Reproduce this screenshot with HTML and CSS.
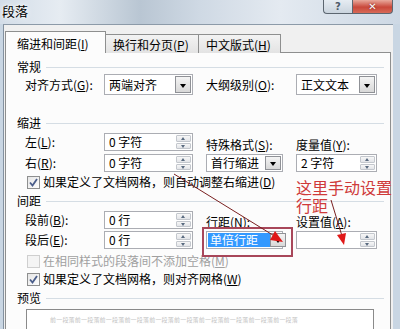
FILE: index.html
```html
<!DOCTYPE html>
<html lang="zh-CN">
<head>
<meta charset="utf-8">
<title>段落</title>
<link rel="stylesheet" href="styles.css">
</head>
<body>
<div class="win">
  <div class="titlebar">
    <span class="title">段落</span>
    <div class="caps">
      <span class="cap help">?</span>
      <span class="cap close">✕</span>
    </div>
  </div>
  <div class="client">
    <div class="tabs">
      <div class="tab active">缩进和间距(<u>I</u>)</div>
      <div class="tab">换行和分页(<u>P</u>)</div>
      <div class="tab">中文版式(<u>H</u>)</div>
    </div>
    <div class="pane">
      <div class="sec s-general"><span>常规</span></div>
      <div class="grid g-general">
        <span class="lbl">对齐方式(<u>G</u>):</span>
        <div class="select c2"><span class="val">两端对齐</span><i class="dd"></i></div>
        <span class="lbl c4">大纲级别(<u>O</u>):</span>
        <div class="select c5"><span class="val">正文文本</span><i class="dd"></i></div>
      </div>

      <div class="sec s-indent"><span>缩进</span></div>
      <div class="grid g-pair g-indent">
        <span class="lbl r1">左(<u>L</u>):</span>
        <div class="spin c2 r1"><span class="val">0 字符</span><i class="sp"><b class="up"></b><b class="down"></b></i></div>
        <span class="lbl r2">右(<u>R</u>):</span>
        <div class="spin c2 r2"><span class="val">0 字符</span><i class="sp"><b class="up"></b><b class="down"></b></i></div>
        <div class="stack c4">
          <span class="slbl">特殊格式(<u>S</u>):</span>
          <div class="select narrow"><span class="val">首行缩进</span><i class="dd"></i></div>
        </div>
        <div class="stack c5">
          <span class="slbl">度量值(<u>Y</u>):</span>
          <div class="spin"><span class="val">2 字符</span><i class="sp"><b class="up"></b><b class="down"></b></i></div>
        </div>
      </div>
      <div class="check c-auto"><i class="box on"><svg viewBox="0 0 11 11"><path d="M2 5.5 L4.5 8.5 L9 2"/></svg></i><span>如果定义了文档网格，则自动调整右缩进(<u>D</u>)</span></div>

      <div class="sec s-spacing"><span>间距</span></div>
      <div class="grid g-pair g-space">
        <span class="lbl r1">段前(<u>B</u>):</span>
        <div class="spin c2 r1"><span class="val">0 行</span><i class="sp"><b class="up"></b><b class="down"></b></i></div>
        <span class="lbl r2">段后(<u>E</u>):</span>
        <div class="spin c2 r2"><span class="val">0 行</span><i class="sp"><b class="up"></b><b class="down"></b></i></div>
        <div class="stack c4">
          <span class="slbl">行距(<u>N</u>):</span>
          <div class="select narrow"><span class="val sel">单倍行距</span><i class="dd"></i></div>
        </div>
        <div class="stack c5">
          <span class="slbl">设置值(<u>A</u>):</span>
          <div class="spin"><span class="val"></span><i class="sp"><b class="up"></b><b class="down"></b></i></div>
        </div>
      </div>
      <div class="check c-dis"><i class="box"></i><span>在相同样式的段落间不添加空格(<u>M</u>)</span></div>
      <div class="check c-grid"><i class="box on"><svg viewBox="0 0 11 11"><path d="M2 5.5 L4.5 8.5 L9 2"/></svg></i><span>如果定义了文档网格，则对齐网格(<u>W</u>)</span></div>

      <div class="sec s-preview"><span>预览</span></div>
      <div class="preview">
        <p>前一段落前一段落前一段落前一段落前一段落前一段落前一段落前一段落前一段落前一段落</p>
      </div>
    </div>
  </div>

  <div class="note"><span class="nl">这里手动设置</span><span class="nl">行距</span></div>
  <div class="redbox"></div>
  <svg class="arrows" width="400" height="329" viewBox="0 0 400 329">
    <line x1="174" y1="174" x2="276" y2="237" />
    <polygon class="head" points="283,242 270,240 275,231" />
    <line x1="331" y1="200" x2="342" y2="236" />
    <polygon class="head" points="344,245 337,235 346,233" />
  </svg>
</div>
</body>
</html>
```

FILE: styles.css
```css
* { box-sizing: border-box; margin: 0; padding: 0; }
html, body { width: 400px; height: 329px; overflow: hidden; }
body {
  font-family: "Noto Sans CJK SC", "Noto Sans", sans-serif;
  font-size: 12px;
  line-height: 14px;
  color: #000;
  background: #c9d6e3;
}
u { text-decoration: underline; text-underline-offset: 1px; }

.win { position: relative; width: 400px; height: 329px; overflow: hidden; }

.titlebar {
  height: 24px;
  display: flex;
  align-items: flex-start;
  background: linear-gradient(90deg, #d3dde8 0%, #e6ecf2 15%, #b9c6d3 35%, #cfd9e4 50%, #e4eaf1 70%, #cdd8e4 100%);
}
.title { font-size: 13px; line-height: 16px; padding: 3px 0 0 2px; text-shadow: 0 0 6px #fff, 0 0 3px #fff; }
.caps { margin-left: auto; margin-right: 7px; display: flex; }
.cap {
  height: 14px;
  display: flex; align-items: center; justify-content: center;
  border: 1px solid #5c6670; border-top: none;
  font-family: "DejaVu Sans", sans-serif;
}
.help {
  width: 29px; border-radius: 0 0 0 4px; border-right: none;
  background: linear-gradient(#e6ecf2, #cad4de);
  color: #4d5a69; font-size: 10px; font-weight: bold;
}
.close {
  width: 41px; border-radius: 0 0 4px 0;
  background: linear-gradient(#e9a99c, #c9483a 55%, #d86a58);
  color: #fff; font-size: 10px; font-weight: bold;
  text-shadow: 0 0 2px #6a1a10;
}

.client {
  margin-left: 3px; margin-right: 7px;
  height: 305px;
  background: #f0f0f0;
  border-left: 1px solid #8391a0;
  border-top: 1px solid #8c9aa8;
  padding: 6px 1px 0 1px;
  overflow: hidden;
}

.tabs { display: flex; align-items: flex-end; height: 22px; position: relative; z-index: 1; }
.tab {
  height: 19px;
  border: 1px solid #8e8f8f; border-bottom: none;
  background: linear-gradient(#f3f3f3, #e3e3e3);
  padding: 2px 0 0 7px;
  margin-left: -1px;
  line-height: 15px;
}
.tab:nth-child(2) { width: 94px; }
.tab:nth-child(3) { width: 83px; }
.tab.active {
  width: 101px; height: 22px; margin-left: 0;
  background: #fcfcfc;
  padding: 4px 0 0 11px;
  z-index: 2;
}

.pane {
  margin-top: -1px;
  width: 386px;
  height: 290px;
  border: 1px solid #8e8f8f;
  border-bottom: none;
  background: #fcfcfc;
  padding: 0 0 0 11px;
  overflow: hidden;
}

.sec { display: flex; align-items: center; height: 14px; }
.sec::after { content: ""; flex: 1; height: 1px; background: #d5dde4; margin: 1px 6px 0 5px; }
.s-general { margin-top: 7px; }
.s-indent { margin-top: 21px; }
.s-spacing { margin-top: 5px; }
.s-preview { margin-top: 5px; }

.grid {
  display: grid;
  grid-template-columns: 79px 89px 13px 90px 81px;
  margin-left: 8px;
  align-items: center;
}
.lbl { grid-column: 1; white-space: nowrap; }
.c2 { grid-column: 2; }
.c4 { grid-column: 4; }
.c5 { grid-column: 5; }
.r1 { grid-row: 1; }
.r2 { grid-row: 2; }

.g-general { height: 21px; grid-template-rows: 21px; }
.g-general .select { height: 21px; grid-row: 1; }
.g-general .lbl { grid-row: 1; }

.g-pair { grid-template-rows: 18px 18px; }
.g-indent { margin-top: 3px; row-gap: 3px; }
.g-space { margin-top: 3px; row-gap: 2px; }
.g-pair .stack { grid-row: 1 / 3; align-self: end; display: flex; flex-direction: column; }
.slbl { height: 16px; white-space: nowrap; }

.select, .spin {
  height: 18px;
  border: 1px solid #abadb3;
  background: #fff;
  display: flex; align-items: center;
  padding: 1px;
}
.select.narrow { width: 77px; }
.val { flex: 1; padding-left: 3px; white-space: nowrap; line-height: 14px; }
.val.sel { flex: 0 0 62px; background: #3399ff; color: #fff; padding-left: 2px; line-height: 14px; }
.val.sel + .dd { margin-left: auto; }
.dd {
  width: 16px; align-self: stretch; flex: none;
  border: 1px solid #8f9196;
  background: linear-gradient(#f4f4f4, #d8d8d8);
  position: relative;
}
.dd::after {
  content: ""; position: absolute; left: 4px; top: 5px;
  border-left: 3.5px solid transparent; border-right: 3.5px solid transparent; border-top: 4px solid #000;
}
.g-general .dd::after { top: 7px; }
.sp { width: 15px; flex: none; align-self: stretch; display: flex; flex-direction: column; gap: 1px; }
.sp b {
  flex: 1; position: relative;
  border: 1px solid #c3c7cd; border-radius: 1px;
  background: linear-gradient(#f7f7f7, #e2e4e8);
}
.sp b::after {
  content: ""; position: absolute; left: 4px; top: 2px;
  border-left: 2.5px solid transparent; border-right: 2.5px solid transparent;
}
.sp .up::after { border-bottom: 3px solid #5a6b80; top: 1px; }
.sp .down::after { border-top: 3px solid #5a6b80; top: 1px; }

.check { display: flex; align-items: center; margin-left: 10px; height: 14px; gap: 3px; }
.box {
  width: 13px; height: 13px;
  border: 1px solid #8e8f8f;
  background: linear-gradient(135deg, #e6e6e6, #fdfdfd);
  display: flex; align-items: center; justify-content: center;
}
.box svg { width: 11px; height: 11px; fill: none; stroke: #4a5d8a; stroke-width: 1.8; }
.c-auto { margin-top: 3px; }
.c-dis { margin-top: 5px; color: #a0a0a0; }
.c-dis .box { border-color: #cfcfcf; background: #f4f4f4; }
.c-grid { margin-top: 4px; }

.preview {
  margin: 4px 0 0 9px;
  width: 348px; height: 40px;
  border: 1px solid #8a8a8a;
  background: #fff;
  padding: 6px 0 0 23px;
}
.preview p { font-size: 6px; line-height: 8px; color: #c4c4c4; letter-spacing: 0.2px; white-space: nowrap; }

.note {
  position: absolute; left: 296px; top: 178px;
  font-size: 16px; line-height: 18px;
  color: #cf3a3a;
  display: flex; flex-direction: column;
}
.nl { display: block; height: 18px; line-height: 18px; }
.redbox {
  position: absolute; left: 202px; top: 227px;
  width: 91px; height: 30px;
  border: 2px solid #a8475a;
}
.arrows { position: absolute; left: 0; top: 0; pointer-events: none; }
.arrows line { stroke: #7a2020; stroke-width: 1; }
.arrows .head { fill: #e01818; }
```
